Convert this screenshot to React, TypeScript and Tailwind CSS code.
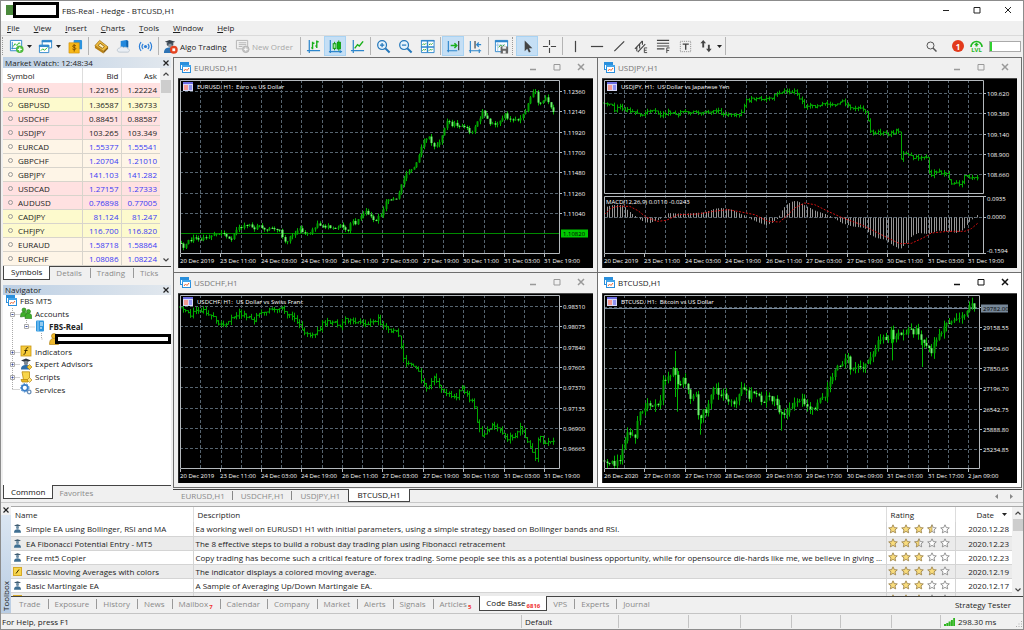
import { useState } from "react";
import type { ReactNode } from "react";

type Point = [number, number];

const TINTS = {
  pink: "bg-[#ffe1e1]",
  yellow: "bg-[#fdfacd]",
  cream: "bg-[#fef5e7]",
};

const QUOTES: { symbol: string; bid: string; ask: string; tint: keyof typeof TINTS; blue?: boolean }[] = [
  { symbol: "EURUSD", bid: "1.22165", ask: "1.22224", tint: "pink" },
  { symbol: "GBPUSD", bid: "1.36587", ask: "1.36733", tint: "yellow" },
  { symbol: "USDCHF", bid: "0.88451", ask: "0.88587", tint: "pink" },
  { symbol: "USDJPY", bid: "103.265", ask: "103.349", tint: "pink" },
  { symbol: "EURCAD", bid: "1.55377", ask: "1.55541", tint: "cream", blue: true },
  { symbol: "GBPCHF", bid: "1.20704", ask: "1.21010", tint: "cream", blue: true },
  { symbol: "GBPJPY", bid: "141.103", ask: "141.282", tint: "cream", blue: true },
  { symbol: "USDCAD", bid: "1.27157", ask: "1.27333", tint: "pink", blue: true },
  { symbol: "AUDUSD", bid: "0.76898", ask: "0.77005", tint: "pink", blue: true },
  { symbol: "CADJPY", bid: "81.124", ask: "81.247", tint: "yellow", blue: true },
  { symbol: "CHFJPY", bid: "116.700", ask: "116.820", tint: "yellow", blue: true },
  { symbol: "EURAUD", bid: "1.58718", ask: "1.58864", tint: "cream", blue: true },
  { symbol: "EURCHF", bid: "1.08086", ask: "1.08224", tint: "cream", blue: true },
];

const SCRIPTS = [
  { kind: "ea", name: "Simple EA using Bollinger, RSI and MA", text: "Ea working well on EURUSD1 H1 with initial parameters, using a simple strategy based on Bollinger bands and RSI.", rating: 3.5, date: "2020.12.28" },
  { kind: "ea", name: "EA Fibonacci Potential Entry - MT5", text: "The 8 effective steps to build a robust day trading plan using Fibonacci retracement", rating: 2.5, date: "2020.12.23" },
  { kind: "ea", name: "Free mt5 Copier", text: "Copy trading has become such a critical feature of forex trading. Some people see this as a potential business opportunity, while for opensource die-hards like me, we believe in giving ...", rating: 3, date: "2020.12.23" },
  { kind: "ind", name: "Classic Moving Averages with colors", text: "The indicator displays a colored moving average.", rating: 4, date: "2020.12.19" },
  { kind: "ea", name: "Basic Martingale EA", text: "A Sample of Averaging Up/Down Martingale EA.", rating: 3, date: "2020.12.17" },
  { kind: "ind", name: "", text: "", rating: 3, date: "" },
];

const DATES_2019 = ["20 Dec 2019", "23 Dec 11:00", "24 Dec 03:00", "24 Dec 19:00", "26 Dec 11:00", "27 Dec 03:00", "27 Dec 19:00", "30 Dec 11:00", "31 Dec 03:00", "31 Dec 19:00"];
const DATES_2020 = ["26 Dec 2020", "27 Dec 01:00", "27 Dec 17:00", "28 Dec 09:00", "29 Dec 01:00", "29 Dec 17:00", "30 Dec 09:00", "31 Dec 01:00", "31 Dec 17:00", "2 Jan 09:00"];

// price paths, in thirds of a pixel from the chart's own corner
const EURUSD: Point[] = [[8,495],[14,510],[27,492],[47,480],[67,482],[92,475],[112,463],[132,467],[150,478],[158,492],[172,455],[187,447],[212,440],[227,450],[242,443],[257,453],[282,452],[304,456],[314,485],[324,495],[337,475],[352,470],[362,452],[374,460],[392,465],[407,452],[420,438],[432,447],[447,443],[472,455],[487,440],[497,455],[507,462],[522,430],[532,440],[542,420],[562,400],[572,410],[589,430],[602,415],[612,405],[622,375],[637,362],[657,360],[667,325],[682,285],[697,275],[712,260],[722,230],[732,195],[742,183],[754,178],[765,212],[782,195],[797,150],[807,128],[822,145],[832,132],[842,150],[857,140],[872,158],[885,168],[895,125],[902,130],[912,95],[922,115],[937,140],[957,140],[972,125],[982,105],[994,128],[1027,122],[1042,100],[1052,70],[1070,35],[1080,80],[1102,60],[1112,80],[1130,105]];
const USDJPY: Point[] = [[7,75],[23,78],[38,95],[53,85],[68,95],[98,100],[123,110],[148,95],[173,112],[198,102],[223,108],[248,100],[288,105],[348,100],[360,115],[378,105],[408,112],[420,105],[428,70],[448,62],[498,65],[528,48],[548,38],[563,45],[580,40],[591,58],[608,85],[638,85],[668,75],[698,80],[723,65],[733,80],[753,95],[778,90],[793,100],[800,140],[808,172],[828,162],[853,168],[888,158],[896,240],[906,220],[933,240],[973,240],[981,290],[1008,280],[1033,290],[1048,320],[1063,318],[1076,325],[1088,285],[1103,305],[1123,295],[1131,302]];
const USDCHF: Point[] = [[7,42],[22,52],[32,67],[40,62],[57,49],[77,52],[92,64],[107,67],[122,92],[137,99],[152,85],[167,72],[182,59],[197,67],[227,79],[247,59],[272,52],[312,47],[327,67],[342,72],[357,92],[382,117],[402,127],[422,115],[432,92],[447,85],[472,92],[487,102],[502,79],[527,92],[542,85],[562,97],[582,87],[600,77],[612,97],[632,114],[652,109],[662,132],[672,177],[679,207],[702,212],[722,232],[732,267],[747,289],[767,257],[782,275],[807,305],[832,315],[852,282],[867,307],[887,337],[897,387],[912,427],[932,409],[947,397],[967,417],[982,435],[1012,432],[1022,397],[1037,427],[1052,457],[1072,502],[1082,417],[1097,457],[1112,449],[1130,435]];
const BTCUSD: Point[] = [[7,502],[18,509],[33,512],[53,502],[63,447],[73,422],[88,417],[98,432],[106,377],[116,337],[123,357],[138,332],[153,342],[168,337],[178,307],[183,252],[198,257],[213,227],[223,247],[233,287],[243,257],[258,287],[268,322],[280,302],[288,367],[295,377],[303,352],[313,367],[321,317],[333,292],[343,287],[350,317],[363,307],[388,322],[400,332],[413,292],[428,287],[438,312],[453,292],[468,312],[483,332],[495,312],[518,327],[528,357],[548,367],[568,342],[593,317],[608,327],[623,357],[638,342],[653,312],[668,312],[678,267],[693,247],[703,212],[718,217],[733,177],[745,232],[763,227],[783,222],[793,197],[813,192],[823,157],[833,132],[853,142],[865,112],[878,142],[893,117],[908,122],[918,102],[933,122],[945,112],[960,152],[978,167],[988,172],[998,147],[1018,112],[1038,92],[1058,87],[1078,77],[1093,52],[1108,37],[1122,52]];
const MACD: Point[] = [[7,388],[28,382],[48,380],[63,383],[78,398],[93,410],[106,420],[123,430],[143,435],[163,428],[183,418],[198,405],[213,406],[248,407],[308,403],[338,392],[358,390],[388,395],[408,405],[428,413],[443,422],[468,433],[493,442],[508,435],[528,420],[540,395],[553,380],[573,369],[588,370],[613,385],[638,398],[668,408],[693,418],[718,435],[748,445],[788,450],[803,470],[823,480],[848,485],[868,500],[893,514],[908,500],[928,475],[948,465],[978,468],[1008,458],[1038,460],[1063,465],[1083,455],[1098,435],[1113,420],[1128,408]];
const SIGNAL: Point[] = [[7,410],[28,390],[48,385],[83,385],[108,398],[133,418],[168,430],[193,427],[228,410],[288,408],[333,400],[378,395],[418,402],[458,410],[498,430],[533,432],[553,415],[578,390],[608,375],[638,380],[678,400],[718,418],[778,440],[818,460],[858,480],[893,497],[928,496],[963,480],[988,465],[1038,460],[1088,460],[1108,452],[1128,435]];

// long wicks that the random ones do not reach: x, top, bottom
const BTC_SPIKES = [[218, 174, 312], [226, 225, 356], [295, 370, 425], [538, 352, 413], [871, 112, 202], [960, 140, 222]];

const CHART_FONT = "font-['Open_Sans',sans-serif] text-[6px]";

function valueAt(path: Point[], x: number) {
  const i = path.findIndex((p) => p[0] >= x);
  if (i <= 0) return path[i === 0 ? 0 : path.length - 1][1];
  const [x0, y0] = path[i - 1];
  const [x1, y1] = path[i];
  return y0 + ((y1 - y0) * (x - x0)) / (x1 - x0);
}

function noise(n: number) {
  const v = Math.sin(n * 127.1 + 11.7) * 43758.5453;
  return v - Math.floor(v);
}

function buildBars(path: Point[], amp: number) {
  const first = path[0][0];
  const last = path[path.length - 1][0];
  const bars = [];
  let open = path[0][1] / 3;
  for (let i = 0; first + i * 7.6 <= last; i++) {
    const x = first + i * 7.6;
    const close = valueAt(path, x) / 3 + (noise(i) - 0.5) * amp;
    const high = Math.min(open, close) - noise(i + 500) * amp;
    const low = Math.max(open, close) + noise(i + 900) * amp;
    bars.push({ x: Math.round(x / 3), open, close, high, low });
    open = close;
  }
  return bars;
}

function Candles({ path, amp }: { path: Point[]; amp: number }) {
  return (
    <g>
      {buildBars(path, amp).map((b, i) => {
        const top = Math.min(b.open, b.close);
        const h = Math.max(Math.abs(b.open - b.close), 1);
        const down = b.close > b.open;
        return (
          <g key={i}>
            <rect x={b.x} y={b.high} width={1} height={b.low - b.high} fill="#00b400" />
            <rect x={b.x - 0.5} y={top} width={2} height={h} fill={down ? "#6df56d" : "#00a000"} />
          </g>
        );
      })}
    </g>
  );
}

function OhlcBars({ path, amp }: { path: Point[]; amp: number }) {
  return (
    <g fill="#00a800">
      {buildBars(path, amp).map((b, i) => (
        <g key={i}>
          <rect x={b.x} y={b.high} width={1} height={Math.max(b.low - b.high, 2)} />
          <rect x={b.x - 1} y={b.open - 0.5} width={1} height={1} />
          <rect x={b.x + 1} y={b.close - 0.5} width={1} height={1} />
        </g>
      ))}
    </g>
  );
}

type ChartProps = {
  title: string;
  dates: string[];
  prices: string[];
  firstRow: number;
  right?: number;
  top?: number;
  split?: boolean;
  children: ReactNode;
  tag?: { y: number; text: string; line: string; fill: string };
  // the price tag covers the first label of the scale
  hideFirst?: boolean;
};

function Chart({ title, dates, prices, firstRow, right = 381, top = 2, split, children, tag, hideFirst }: ChartProps) {
  const bottom = top + 174;
  const priceBottom = split ? 116 : bottom;
  const cols = Array.from({ length: 18 }, (_, i) => Math.round(22.3 + i * 20.24) + 0.5);
  const rows = prices.map((_, i) => Math.round(firstRow + i * 20.33) + 0.5);
  return (
    <svg viewBox="0 0 415 190" preserveAspectRatio="xMinYMin meet" className="block min-h-0 w-full flex-1 bg-black" role="img" aria-label={title}>
      <path d="M0 190V.5H415" fill="none" stroke="#4a4a4a" />
      <g stroke="#56646f" strokeDasharray="3 2" fill="none">
        {cols.map((x) => (
          <path key={x} d={`M${x} ${top}V${bottom}`} />
        ))}
        {rows.map((y) => (
          <path key={y} d={`M2 ${y}H${right}`} />
        ))}
        {split && <path d={`M2 139.5H${right}`} />}
      </g>
      {tag && <path d={`M2 ${tag.y}H${right}`} stroke={tag.line} />}
      {children}
      <g stroke="#b4b9bd" fill="none">
        <path d={`M2.5 ${top + 0.5}H${right + 0.5}V${priceBottom - 0.5}H2.5Z`} />
        {split && <path d={`M2.5 118.5H${right + 0.5}V${bottom - 0.5}H2.5Z`} />}
        {rows.map((y) => (
          <path key={y} d={`M${right} ${y}h3`} />
        ))}
        {split && <path d={`M${right} 118.5h3M${right} 139.5h3M${right} 175.5h3`} />}
        {dates.map((d, i) => (
          <path key={d} d={`M${Math.round(2 + i * 40.45) + 0.5} ${bottom}v3`} />
        ))}
      </g>
      <g className={CHART_FONT} fill="#fff">
        {prices.map((p, i) =>
          hideFirst && i === 0 ? null : (
            <text key={p} x={right + 4} y={Math.round(rows[i] + 2)}>{p}</text>
          )
        )}
        {split && (
          <>
            <text x={right + 4} y={123}>0.0935</text>
            <text x={right + 4} y={141}>0.0000</text>
            <text x={right + 4} y={175}>-0.1594</text>
            <text x={4} y={126}>MACD(12,26,9) 0.0110 -0.0243</text>
          </>
        )}
        {dates.map((d, i) => (
          <text key={d} x={Math.round(2 + i * 40.45)} y={bottom + 9}>{d}</text>
        ))}
        <text x={19} y={top + 9} xmlSpace="preserve">{title}</text>
      </g>
      {tag && (
        <g className={CHART_FONT}>
          <rect x={right + 2} y={tag.y - 4} width={27} height={8} fill={tag.fill} />
          <text x={right + 4} y={Math.round(tag.y + 2)} fill="#000">{tag.text}</text>
        </g>
      )}
      <rect x="5" y={top + 2} width="10" height="9" fill="#d9d9f5" />
      <rect x="5" y={top + 2} width="10" height="2" fill="#6b6be0" />
      <rect x="6" y={top + 5} width="4" height="5" fill="#f49a94" />
      <rect x="11" y={top + 5} width="3" height="5" fill="#8f93f2" />
    </svg>
  );
}

function ChartIcon() {
  return (
    <svg viewBox="0 0 11 11" className="size-[11px] shrink-0">
      <rect x="0.5" y="0.5" width="8" height="7" fill="#fff" stroke="#2a8fdc" />
      <rect x="0" y="0" width="9" height="3" fill="#2a8fdc" />
      <rect x="2.5" y="3.5" width="8" height="7" fill="#fff" stroke="#2a8fdc" />
      <rect x="2" y="3" width="9" height="2" fill="#43a5ea" />
      <path d="M4 9l1.500-2 1.500 1.500L9 6" fill="none" stroke="#e86a3a" />
    </svg>
  );
}

function WindowButtons({ color, wide }: { color: string; wide?: boolean }) {
  const box = wide ? "flex w-[31px] justify-center" : "flex w-6 justify-center";
  return (
    <div className="flex items-center">
      <button aria-label="Minimize" className={box}>
        <svg viewBox="0 0 8 8" className="size-2"><path d={wide ? "M1 4.500h6" : "M1 6.500h6"} stroke={color} strokeWidth={wide ? 1 : 1.5} /></svg>
      </button>
      <button aria-label="Maximize" className={box}>
        <svg viewBox="0 0 8 8" className="size-2"><path d="M1 1.500h6v5.500H1z" fill="none" stroke={color} /></svg>
      </button>
      <button aria-label="Close" className={box}>
        <svg viewBox="0 0 8 8" className="size-2"><path d="M1 1l6 6M7 1L1 7" stroke={color} strokeWidth={wide ? 1 : 1.5} /></svg>
      </button>
    </div>
  );
}

function ChartWindow({ name, active, children }: { name: string; active?: boolean; children: ReactNode }) {
  return (
    <section className={`flex min-h-0 min-w-0 flex-col px-1 pb-1 ${active ? "bg-white text-[#222]" : "bg-[#f0f0f0] text-[#777]"}`}>
      <header className="flex h-5 shrink-0 items-center gap-[3px] pb-0.5 pl-0.5">
        <ChartIcon />
        <h2 className="flex-1">{name}</h2>
        <WindowButtons color={active ? "#111" : "#999"} />
      </header>
      {children}
    </section>
  );
}

const ICONS: Record<string, ReactNode> = {
  newChart: (
    <>
      <path d="M1.500 1.500h12v11h-12z" fill="#fff" stroke="#2d86cc" />
      <path d="M3.500 3v8M2.500 10h9" stroke="#2d86cc" fill="none" />
      <path d="M4.500 8l2-3 2 2 2-3 1.500 1" stroke="#26b226" fill="none" />
      <circle cx="11.500" cy="11" r="4" fill="#4dbb3c" />
      <path d="M11.500 8.800v4.400M9.300 11h4.400" stroke="#fff" strokeWidth="1.300" />
    </>
  ),
  profiles: (
    <>
      <path d="M4.500 1.500h10v8h-10z" fill="#fff" stroke="#2d86cc" />
      <path d="M4 2.500h11" stroke="#2d86cc" strokeWidth="2" />
      <path d="M1.500 6.500h10v8h-10z" fill="#fff" stroke="#2d86cc" />
      <path d="M1 7.500h11" stroke="#2d86cc" strokeWidth="2" />
      <path d="M3 12.500l2-2 2 1.500 3-3" stroke="#26b226" fill="none" />
    </>
  ),
  market: (
    <>
      <rect x="6" y="1" width="9" height="10" rx="1" fill="#2d93dd" />
      <path d="M1 4h11v11H1z" fill="#f7b718" stroke="#c98d08" strokeWidth=".6" />
      <path d="M8.500 7.300c-2-1.200-3.500-.6-3.500.5 0 1.500 3.300.9 3.300 2.400 0 1.200-1.800 1.600-3.600.4M6.600 5.600v7.800" stroke="#7a4c00" fill="none" />
    </>
  ),
  gold: (
    <>
      <path d="M6 1.500l9 7-5 4.500-9-6z" fill="#f0bc3c" stroke="#9b6d10" strokeWidth=".8" />
      <path d="M1 7l9 6v2.500L1 9.500z" fill="#b98113" />
      <path d="M10 13l5-4.500v2l-5 5z" fill="#8f5f0a" />
      <path d="M6.500 4.500l4.500 3.500-2 2-4.500-3z" fill="#fff1bd" stroke="#7a4c00" strokeWidth=".8" />
    </>
  ),
  cloud: (
    <>
      <path d="M5 2l6-1 2 1v7l-8 1z" fill="#2288dd" />
      <path d="M11 1l2 1v7l-2-1z" fill="#0f62ad" />
      <path d="M4 9.500c1-1.500 3-1.500 4-.5 2-1 4.500 0 4.500 1.500 2.500 0 2.500 3 0 3.500H4c-3.500 0-3.500-4 0-4.500z" fill="#e9eef4" stroke="#a9b5c2" strokeWidth=".7" />
    </>
  ),
  signals: (
    <g fill="none" stroke="#2d7fd8" strokeWidth="1.300">
      <circle cx="8" cy="8" r="1.700" fill="#2d7fd8" stroke="none" />
      <path d="M5.500 5.300a4 4 0 000 5.400M10.500 5.300a4 4 0 010 5.400M3.300 3.300a7 7 0 000 9.400M12.700 3.300a7 7 0 010 9.400" />
    </g>
  ),
  algo: (
    <>
      <path d="M2 3l5-2 6 2-5 2z" fill="#333c46" />
      <path d="M4 4h7v2.500c-1 2-6 2-7 0z" fill="#4b5763" />
      <circle cx="7.500" cy="7" r="2" fill="#8d97a1" />
      <path d="M1 15c0-5 3-6 6.500-6 3 0 5 1 5 6z" fill="#2c73b5" />
      <circle cx="11.500" cy="11.500" r="4.200" fill="#e5431f" />
      <rect x="10" y="10" width="3" height="3" fill="#fff" />
    </>
  ),
  newOrder: (
    <g fill="none" stroke="#b3b3b3">
      <path d="M1.500 1.500h12v7M1.500 1.500v9h6" />
      <path d="M4 4h8M4 6h8M4 8h4" />
      <circle cx="11.500" cy="11" r="3.500" fill="#c4c4c4" />
      <path d="M11.500 9v4M9.500 11h4" stroke="#fff" />
    </g>
  ),
  bars: (
    <g fill="none">
      <path d="M3.500 1v14M1 12.500h14" stroke="#2d86cc" strokeWidth="1.300" />
      <path d="M7 3v8M5.500 9.500H7M7 4.500h2M11.500 1.500v8M10 7.500h1.500M11.500 3h2" stroke="#19b019" strokeWidth="1.500" />
    </g>
  ),
  candles: (
    <g>
      <path d="M2.500 1v14M1 13.500h14M13 12v3" stroke="#2d86cc" strokeWidth="1.300" fill="none" />
      <path d="M7 3v9M11.500 1.500v11" stroke="#0a9a0a" />
      <rect x="5.500" y="5" width="3" height="5" fill="#9be89b" stroke="#0a9a0a" />
      <rect x="10" y="3.500" width="3.200" height="7" fill="#10b510" stroke="#0a9a0a" />
    </g>
  ),
  line: (
    <g fill="none">
      <path d="M3.500 1v14M1 12.500h14" stroke="#2d86cc" strokeWidth="1.300" />
      <path d="M5 10l3-4 2 1.500 4-5" stroke="#19b019" strokeWidth="1.500" />
    </g>
  ),
  zoomIn: (
    <g fill="none" stroke="#2377bb">
      <circle cx="6.500" cy="6.500" r="4.700" fill="#e6f3fc" strokeWidth="1.300" />
      <path d="M10 10l4.500 4.500" strokeWidth="2.200" />
      <path d="M4.200 6.500h4.600M6.500 4.200v4.600" strokeWidth="1.300" />
    </g>
  ),
  zoomOut: (
    <g fill="none" stroke="#2377bb">
      <circle cx="6.500" cy="6.500" r="4.700" fill="#e6f3fc" strokeWidth="1.300" />
      <path d="M10 10l4.500 4.500" strokeWidth="2.200" />
      <path d="M4.200 6.500h4.600" strokeWidth="1.300" />
    </g>
  ),
  tile: (
    <g fill="none">
      <path d="M1.500 1.500h13.500v13H1.500z" fill="#fff" stroke="#2d86cc" />
      <path d="M1 2h14.500M8 2v12M1 8.500h14" stroke="#2d86cc" strokeWidth="1.500" />
      <path d="M2.500 6.500l1.500-1.500 1 1 1.500-1.500M9.500 6.500l1.500-1.500 1 1 1.500-1.500M2.500 12.500l1.500-1.500 1 1 1.500-1.500M9.500 12.500l1.500-1.500 1 1 1.500-1.500" stroke="#30a830" />
    </g>
  ),
  shift: (
    <g fill="none">
      <path d="M2.500 2v12M1 12.500h11" stroke="#2d86cc" strokeWidth="1.200" />
      <path d="M5 7h6M9 4.500L11.500 7 9 9.500" stroke="#19b019" strokeWidth="1.600" />
      <path d="M13.500 2v10" stroke="#444" strokeWidth="1.300" />
    </g>
  ),
  indent: (
    <g fill="none">
      <path d="M2.500 2v13M1 12.500h13M12 11v4" stroke="#2d86cc" strokeWidth="1.200" />
      <path d="M7.500 2v8" stroke="#444" strokeWidth="1.300" />
      <path d="M14 6H9.500M11.500 3.800L9.300 6l2.200 2.200" stroke="#2d86cc" strokeWidth="1.400" />
    </g>
  ),
  template: (
    <>
      <path d="M1.500 1.500h13v12h-13z" fill="#fff" stroke="#2d86cc" />
      <path d="M1 2.500h14" stroke="#2d86cc" strokeWidth="2" />
      <path d="M4 4v9M2 6.500h10" stroke="#9fc8e8" />
      <path d="M5 9l2-2.500 2 1.500 2-2" stroke="#30a830" fill="none" />
      <path d="M7 8h8v7.500H7z" fill="#666" />
      <path d="M9 8h4v2.500H9zM9.500 12.500h3v3h-3z" fill="#eee" />
    </>
  ),
  cursor: <path d="M5 1.500v11.500l2.700-2.500 1.800 4 1.900-.9-1.800-3.800h3.600z" fill="#444" />,
  cross: <path d="M8 1v5.500M8 9.500V15M1 8h5.500M9.500 8H15" stroke="#444" strokeWidth="1.200" />,
  vline: <path d="M8 2v12" stroke="#444" strokeWidth="1.300" />,
  hline: <path d="M1 8h13" stroke="#444" strokeWidth="1.300" />,
  trend: <path d="M2.500 13L13 2.500" stroke="#444" strokeWidth="1.300" />,
  channel: (
    <g stroke="#444" fill="none">
      <path d="M1 10.500L9 2M4 14l8-8.500M3 8v5M6 5v5M9 2v4" strokeWidth="1.200" />
      <path d="M14 9.500h-3v5h3M11 12h2.500" />
    </g>
  ),
  fibo: (
    <g stroke="#444" fill="none">
      <path d="M1 1.500h13M1 4.500h13M1 7.500h13M1 10.500h8" strokeWidth="1.200" />
      <path d="M14.500 9.500h-3v5.500M11.500 12.200h2.500" />
    </g>
  ),
  text: (
    <g fill="none" stroke="#444">
      <path d="M2.500 2.500h11v11h-11z" strokeDasharray="1 1" stroke="#888" />
      <path d="M5 5.500h6.500M8.200 5.500v6" strokeWidth="1.500" />
    </g>
  ),
  arrows: (
    <g fill="#444">
      <path d="M4.500 1L1.500 4.500h2V9h2V4.500h2zM10.500 14l3-3.500h-2V6h-2v4.500h-2z" />
    </g>
  ),
};

function Icon({ name }: { name: string }) {
  return (
    <svg viewBox="0 0 16 16" className="size-[15px] shrink-0">{ICONS[name]}</svg>
  );
}

function Tool({ name, label, on, menu }: { name: string; label: string; on?: boolean; menu?: boolean }) {
  return (
    <button
      aria-label={label}
      className={`flex h-5 shrink-0 items-center ${menu ? "w-[29px] gap-[3px] pl-[3px]" : "w-[22px] justify-center"} ${on ? "border border-[#a9d3f3] bg-[#c5dff5]" : ""}`}
    >
      <Icon name={name} />
      {menu && <Caret />}
    </button>
  );
}

function Caret() {
  return (
    <svg viewBox="0 0 5 3" className="h-[3px] w-[5px] shrink-0"><path d="M0 0h5L2.500 3z" fill="#222" /></svg>
  );
}

function Sep() {
  return <span className="mr-px ml-0.5 h-[18px] w-px shrink-0 bg-[#b4b4b4]" />;
}

function Grip() {
  return <span className="mr-0.5 h-[18px] w-0.5 shrink-0 border-l border-dotted border-[#999]" />;
}

function Toolbar() {
  return (
    <div className="flex h-[22px] shrink-0 items-center border-t border-[#dadada] pb-px pl-px">
      <Grip />
      <Tool name="newChart" label="New chart" menu />
      <Tool name="profiles" label="Profiles" menu />
      <Tool name="market" label="Market" />
      <Sep />
      <Tool name="gold" label="Open data folder" />
      <Tool name="cloud" label="Virtual hosting" />
      <Tool name="signals" label="Signals" />
      <Sep />
      <button className="flex w-[72px] shrink-0 items-center gap-0.5 pl-[3px] whitespace-nowrap">
        <Icon name="algo" />
        Algo Trading
      </button>
      <button disabled className="flex w-[66px] shrink-0 items-center gap-0.5 pl-[3px] whitespace-nowrap text-[#a8a8a8]">
        <Icon name="newOrder" />
        New Order
      </button>
      <Sep />
      <Tool name="bars" label="Bar chart" />
      <Tool name="candles" label="Candlesticks" on />
      <Tool name="line" label="Line chart" />
      <Sep />
      <Tool name="zoomIn" label="Zoom in" />
      <Tool name="zoomOut" label="Zoom out" />
      <Tool name="tile" label="Tile windows" />
      <Sep />
      <Tool name="shift" label="Auto scroll" on />
      <Tool name="indent" label="Chart shift" />
      <Sep />
      <Tool name="template" label="Templates" />
      <Grip />
      <Tool name="cursor" label="Cursor" on />
      <Tool name="cross" label="Crosshair" />
      <Sep />
      <Tool name="vline" label="Vertical line" />
      <Tool name="hline" label="Horizontal line" />
      <Tool name="trend" label="Trendline" />
      <Tool name="channel" label="Equidistant channel" />
      <Tool name="fibo" label="Fibonacci retracement" />
      <Tool name="text" label="Text label" />
      <Tool name="arrows" label="Objects" menu />
      <span className="h-[18px] w-px bg-[#b4b4b4]" />
      <div className="ml-auto flex items-center pr-0.5">
        <button aria-label="Search" className="mr-[15px]">
          <svg viewBox="0 0 11 11" className="size-[11px]" fill="none" stroke="#555">
            <circle cx="4.500" cy="4.500" r="3.500" /><path d="M7 7l3.500 3.500" strokeWidth="1.500" />
          </svg>
        </button>
        <button aria-label="Notifications" className="mr-1.5 flex size-3 items-center justify-center rounded-full bg-[#e23a1c] font-bold text-white">1</button>
        <div className="mr-1.5 flex w-[13px] flex-col items-center text-[6px] leading-[6px] font-bold text-[#1eb91e]">
          <svg viewBox="0 0 13 7" className="h-[7px] w-[13px]" fill="none" stroke="#1eb91e" strokeWidth="1.500">
            <path d="M1 7a5.500 5.500 0 0111 0" /><path d="M6.500 2.500l2.500 2.500h-1.500v1.500h-2V5H4z" fill="#1eb91e" stroke="none" />
          </svg>
          LVL
        </div>
        <div className="h-[11px] w-8 border border-[#aaa] bg-white"><div className="h-full w-0.5 bg-[#2fd12f]" /></div>
      </div>
    </div>
  );
}

function CloseMark({ label }: { label: string }) {
  return (
    <button aria-label={label}>
      <svg viewBox="0 0 6 6" className="size-1.5"><path d="M.5.500l5 5M5.500.500l-5 5" stroke="#222" strokeWidth="1.200" /></svg>
    </button>
  );
}

function ScrollBar({ thumb }: { thumb: string }) {
  return (
    <div className="flex w-[11px] shrink-0 flex-col items-center bg-[#f0f0f0] py-1" aria-hidden="true">
      <svg viewBox="0 0 6 4" className="mb-1 h-1 w-1.5 shrink-0"><path d="M.5 3.500L3 1l2.500 2.500" fill="none" stroke="#444" strokeWidth="1.200" /></svg>
      <span className={`w-[10px] shrink-0 bg-[#cdcdcd] ${thumb}`} />
      <svg viewBox="0 0 6 4" className="mt-auto h-1 w-1.5 shrink-0"><path d="M.5.500L3 3 5.500.500" fill="none" stroke="#444" strokeWidth="1.200" /></svg>
    </div>
  );
}

function DockTabs({ tabs, active, onPick }: { tabs: string[]; active: string; onPick: (tab: string) => void }) {
  return (
    <div className="flex h-[14px] shrink-0 items-stretch">
      {tabs.map((tab, i) => (
        <button
          key={tab}
          onClick={() => onPick(tab)}
          className={
            tab === active
              ? "border border-t-0 border-[#444] bg-white px-[7px] pb-px text-[#111]"
              : "flex items-center border-t border-[#444] pb-px pl-[6px] text-[#8a8a8a]"
          }
        >
          {tab}
          {tab !== active && i < tabs.length - 1 && <span className="ml-2 h-[10px] w-px bg-[#999]" />}
        </button>
      ))}
      <span className="flex-1 border-t border-[#444]" />
    </div>
  );
}

function MarketWatch() {
  const [tab, setTab] = useState("Symbols");
  return (
    <section className="flex flex-col px-0.5">
      <header className="flex h-[11px] items-center justify-between bg-linear-to-r from-[#bccfe4] to-[#e2e8ee] px-0.5">
        <h2>Market Watch: 12:48:34</h2>
        <CloseMark label="Close market watch" />
      </header>
      <div className="flex bg-white">
        <div className="min-w-0 flex-1">
          <table className="w-full table-fixed border-collapse">
            <thead>
              <tr className="h-[15px]">
                <th className="border-r border-[#ddd] p-0 pl-1 text-left font-normal">Symbol</th>
                <th className="w-[39px] border-r border-[#ddd] p-0 pr-0.5 text-right font-normal">Bid</th>
                <th className="w-[39px] p-0 pr-[3px] text-right font-normal">Ask</th>
              </tr>
            </thead>
            <tbody>
              {QUOTES.map((q) => (
                <tr key={q.symbol} className={`h-[14px] border-b border-[#d8d4cc] ${TINTS[q.tint]}`}>
                  <td className="border-r border-[#d8d4cc] p-0 pl-[5px]">
                    <span className="flex items-center gap-[5px]">
                      <span className="size-[5px] rounded-full border border-[#999]" />
                      {q.symbol}
                    </span>
                  </td>
                  <td className={`border-r border-[#d8d4cc] p-0 pr-0.5 text-right ${q.blue ? "text-[#3a3af5]" : ""}`}>{q.bid}</td>
                  <td className={`p-0 pr-[3px] text-right ${q.blue ? "text-[#3a3af5]" : ""}`}>{q.ask}</td>
                </tr>
              ))}
            </tbody>
          </table>
        </div>
        <ScrollBar thumb="h-[13px]" />
      </div>
      <DockTabs tabs={["Symbols", "Details", "Trading", "Ticks"]} active={tab} onPick={setTab} />
    </section>
  );
}

const NAV_ICONS: Record<string, ReactNode> = {
  accounts: (
    <g fill="#3fae2a" stroke="#257a17" strokeWidth=".6">
      <circle cx="4" cy="3" r="2" /><path d="M.5 10c0-4 1-5 3.500-5s3.500 1 3.500 4z" />
      <circle cx="8.500" cy="4.500" r="2" /><path d="M5 11.500c0-4 1-5 3.500-5s3.300 1 3.300 5z" />
    </g>
  ),
  server: (
    <>
      <rect x="2" y="0.500" width="8" height="11" rx="1" fill="#2b95de" />
      <path d="M4 .500v11" stroke="#9fd3f7" /><path d="M6 3h3M6 5h3M6 8h2" stroke="#fff" />
    </>
  ),
  user: (
    <g fill="#efb92c" stroke="#a87909" strokeWidth=".6">
      <circle cx="6" cy="3" r="2.500" /><path d="M1.500 11.500c0-5 2-6 4.500-6s4.500 1 4.500 6z" />
    </g>
  ),
  indicators: (
    <>
      <rect x="1" y="1" width="10" height="10" fill="#f6cb3a" stroke="#c79512" strokeWidth=".8" />
      <path d="M8.300 2.800c-1.500-.5-2 .3-2.300 1.700L5.200 8c-.3 1.200-.8 1.600-1.700 1.300M4.300 5.500h3.300" fill="none" stroke="#3c2c00" />
    </>
  ),
  experts: (
    <>
      <path d="M1 2.500L6 .500l5 2-5 2z" fill="#2f3842" /><circle cx="6" cy="5" r="2.200" fill="#7d8892" />
      <path d="M1 11.500c0-3.500 2-4.500 5-4.500s4 1 4 4.500z" fill="#2d6da8" />
      <path d="M9.500 6.500l2.500 2.500-2.500 2.500L7 9z" fill="#f6cb3a" stroke="#a87909" strokeWidth=".6" />
    </>
  ),
  scripts: (
    <>
      <path d="M2 .800h7.500v8H3.500z" fill="#f8d54a" stroke="#bb8a0c" strokeWidth=".8" />
      <path d="M1 8.500h7v2.500H2z" fill="#e9b925" stroke="#bb8a0c" strokeWidth=".8" />
      <path d="M9.500 6.500L12 9l-2.500 2.500L7 9z" fill="#ffe173" stroke="#a87909" strokeWidth=".6" />
    </>
  ),
  services: (
    <g fill="none" stroke="#3a7fc8">
      <circle cx="4.800" cy="4.800" r="3" strokeWidth="1.800" />
      <circle cx="4.800" cy="4.800" r="4.200" strokeDasharray="1.500 1.500" />
      <circle cx="9.200" cy="9" r="1.800" stroke="#6a8fb8" strokeWidth="1.300" />
    </g>
  ),
};

function NavIcon({ name }: { name: string }) {
  return <svg viewBox="0 0 12 12" className="size-3 shrink-0">{NAV_ICONS[name]}</svg>;
}

function Navigator() {
  const [tab, setTab] = useState("Common");
  return (
    <section className="flex min-h-0 flex-1 flex-col px-0.5">
      <header className="flex h-[10px] items-center justify-between bg-linear-to-r from-[#bccfe4] to-[#e2e8ee] px-0.5">
        <h2>Navigator</h2>
        <CloseMark label="Close navigator" />
      </header>
      <div className="min-h-0 flex-1 bg-white">
        <ul className="relative grid h-[101px] auto-rows-fr">
          <svg viewBox="0 0 40 101" className="absolute top-0 left-0 h-[101px] w-10" fill="none" stroke="#aaa">
            <path d="M9.500 13v82M9.500 19.500h7M9.500 57.500h7M9.500 69.500h7M9.500 82.500h7M9.500 94.500h7M23.500 25v7h9M38.500 38v6h5" strokeDasharray="1 1" />
            <path d="M7.500 17.500h4v4h-4zM7.500 55.500h4v4h-4zM7.500 67.500h4v4h-4zM7.500 80.500h4v4h-4zM21.500 29.500h4v4h-4z" fill="#fff" />
            <path d="M8.500 19.500h2M8.500 57.500h2M9.500 56.500v2M8.500 69.500h2M9.500 68.500v2M8.500 82.500h2M9.500 81.500v2M22.500 31.500h2" stroke="#36489a" />
          </svg>
          <li className="flex items-center gap-[3px] pl-[3px]"><ChartIcon /> FBS MT5</li>
          <li className="flex items-center gap-[3px] pl-[17px]"><NavIcon name="accounts" /> Accounts</li>
          <li className="flex items-center gap-[3px] pl-[31px] font-bold"><NavIcon name="server" /> FBS-Real</li>
          <li className="flex items-center pl-[45px]">
            <NavIcon name="user" />
            <span className="-ml-[5px] h-[10px] flex-1 border-[3px] border-black bg-white" />
          </li>
          <li className="flex items-center gap-[3px] pl-[17px]"><NavIcon name="indicators" /> Indicators</li>
          <li className="flex items-center gap-[3px] pl-[17px]"><NavIcon name="experts" /> Expert Advisors</li>
          <li className="flex items-center gap-[3px] pl-[17px]"><NavIcon name="scripts" /> Scripts</li>
          <li className="flex items-center gap-[3px] pl-[17px]"><NavIcon name="services" /> Services</li>
        </ul>
      </div>
      <DockTabs tabs={["Common", "Favorites"]} active={tab} onPick={setTab} />
    </section>
  );
}

const STAR = "M5 .800l1.300 2.800 3 .300-2.300 2 .700 3L5 7.400 2.300 8.900l.700-3-2.300-2 3-.300z";

function Stars({ value }: { value: number }) {
  return (
    <div className="flex gap-[3px]" aria-label={`${value} of 5`}>
      {[1, 2, 3, 4, 5].map((n) => {
        const full = value >= n;
        return (
          <svg key={n} viewBox="0 0 10 10" className="size-[10px]">
            <path d={STAR} fill={full ? "#f9dc7c" : "#fff"} stroke={full ? "#a08850" : "#8a8a8a"} strokeWidth=".9" />
            {!full && value > n - 1 && <path d="M5 .800v6.600L2.300 8.900l.700-3-2.300-2 3-.300z" fill="#f9dc7c" stroke="#a08850" strokeWidth=".7" />}
          </svg>
        );
      })}
    </div>
  );
}

const TOOL_TABS = ["Trade", "Exposure", "History", "News", "Mailbox", "Calendar", "Company", "Market", "Alerts", "Signals", "Articles", "Code Base", "VPS", "Experts", "Journal"];
const COUNTS: Record<string, string> = { Mailbox: "7", Articles: "5", "Code Base": "6816" };

function Toolbox() {
  const [tab, setTab] = useState("Code Base");
  return (
    <section className="flex h-[111px] shrink-0 border-t border-[#c8c8c8] pt-[3px]">
      <div className="flex w-[10px] shrink-0 flex-col items-center gap-0.5 pt-px">
        <CloseMark label="Close toolbox" />
        <div className="flex w-full flex-1 items-end justify-center bg-linear-to-b from-[#dbe6f2] to-[#b9cde3] pb-0.5">
          <h2 className="rotate-180 text-[8px] leading-[10px] [writing-mode:vertical-rl]">Toolbox</h2>
        </div>
      </div>
      <div className="flex min-w-0 flex-1 flex-col">
        <div className="flex h-[90px] overflow-hidden border-t border-[#aaa] bg-white">
          <div className="min-w-0 flex-1">
            <table className="w-full table-fixed border-collapse">
              <thead>
                <tr className="h-[15px] text-left">
                  <th className="w-[182px] border-r border-[#ddd] p-0 pl-1 font-normal">Name</th>
                  <th className="border-r border-[#ddd] p-0 pl-1 font-normal">Description</th>
                  <th className="w-[69px] border-r border-[#ddd] p-0 pl-1 font-normal">Rating</th>
                  <th className="w-[57px] p-0 pr-[5px] font-normal">
                    <span className="flex items-center justify-end gap-2">Date <Caret /></span>
                  </th>
                </tr>
              </thead>
              <tbody>
                {SCRIPTS.map((s, i) => (
                  <tr key={i} className="h-[14px] border-b border-[#d4d4d4] even:bg-[#ebebeb]">
                    <td className="border-r border-[#d4d4d4] p-0 pl-0.5">
                      <span className="flex items-center gap-1">
                        {s.kind === "ea" ? (
                          <svg viewBox="0 0 9 9" className="size-[9px] shrink-0">
                            <path d="M1 1.500L4.500.300 8 1.500 4.500 2.800z" fill="#3f5b70" /><circle cx="4.500" cy="3.500" r="1.500" fill="#6d8ea6" />
                            <path d="M1 8.700C1 6 2.500 5.300 4.500 5.300S8 6 8 8.700z" fill="#3f6f92" />
                          </svg>
                        ) : (
                          <svg viewBox="0 0 9 9" className="size-[9px] shrink-0">
                            <rect x=".5" y=".5" width="8" height="8" fill="#f7d54c" stroke="#d5a926" /><path d="M3 6.500l3-4" stroke="#3c2c00" />
                          </svg>
                        )}
                        <span className="whitespace-nowrap">{s.name}</span>
                      </span>
                    </td>
                    <td className="truncate border-r border-[#d4d4d4] p-0 pl-0.5">{s.text}</td>
                    <td className="border-r border-[#d4d4d4] p-0 pl-px"><Stars value={s.rating} /></td>
                    <td className="p-0 pr-[3px] text-right">{s.date}</td>
                  </tr>
                ))}
              </tbody>
            </table>
          </div>
          <ScrollBar thumb="h-3" />
        </div>
        <div className="flex h-[15px] shrink-0">
          {TOOL_TABS.map((t, i) => {
            const on = t === tab;
            const bar = !on && TOOL_TABS[i + 1] !== tab && i < TOOL_TABS.length - 1;
            return (
              <button
                key={t}
                onClick={() => setTab(t)}
                className={`flex items-center pb-px ${on ? "border border-t-0 border-[#444] bg-white px-1.5 text-[#111]" : "border-t border-[#444] pl-1.5 text-[#8a8a8a] first:pl-2"}`}
              >
                {t}
                {COUNTS[t] && <sub className="bottom-0 mt-1.5 ml-px text-[6px] font-bold text-[#f03030]">{COUNTS[t]}</sub>}
                {!on && <span className={`ml-[7px] h-[10px] w-px ${bar ? "bg-[#999]" : ""}`} />}
              </button>
            );
          })}
          <div className="flex flex-1 items-center justify-end border-t border-[#444] pr-3">
            <button>Strategy Tester</button>
          </div>
        </div>
      </div>
    </section>
  );
}

function StatusBar() {
  const cell = "h-[13px] shrink-0 border-l border-[#c4c4c4]";
  return (
    <footer className="flex h-4 shrink-0 items-center border-t border-[#c4c4c4]">
      <span className="flex-1 pl-px">For Help, press F1</span>
      <span className={`${cell} flex w-[97px] items-center pl-[3px]`}>Default</span>
      <span className={`${cell} w-[70px]`} />
      <span className={`${cell} w-[52px]`} />
      <span className={`${cell} w-[51px]`} />
      <span className={`${cell} w-[49px]`} />
      <span className={`${cell} w-[51px]`} />
      <span className={`${cell} w-[49px]`} />
      <span className={`${cell} flex w-[83px] items-center gap-[3px] pl-[3px]`}>
        <svg viewBox="0 0 11 8" className="h-2 w-[11px]" fill="#2fb51f"><path d="M0 6h2v2H0zM2.300 5h2v3h-2zM4.600 3.500h2V8h-2zM6.900 2h2v6h-2zM9.200 0h1.800v8H9.200z" /></svg>
        <span className="flex-1">298.30 ms</span>
        <svg viewBox="0 0 7 7" className="size-[7px] self-end" fill="#aaa"><path d="M5 0h1v1H5zM5 2.500h1v1H5zM5 5h1v1H5zM2.500 2.500h1v1h-1zM2.500 5h1v1h-1zM0 5h1v1H0z" /></svg>
      </span>
    </footer>
  );
}

function ChartTabs() {
  const [tab, setTab] = useState("BTCUSD,H1");
  const tabs = ["EURUSD,H1", "USDCHF,H1", "USDJPY,H1", "BTCUSD,H1"];
  return (
    <div className="flex h-[14px] shrink-0 pt-px">
      {tabs.map((t, i) => (
        <button
          key={t}
          onClick={() => setTab(t)}
          className={`flex items-center pb-px ${t === tab ? "border border-t-0 border-[#444] bg-white px-2 text-[#111]" : "border-t border-[#444] pl-2 text-[#8a8a8a]"}`}
        >
          {t}
          {t !== tab && <span className={`ml-[7px] h-[9px] w-px ${i < 2 ? "bg-[#888]" : ""}`} />}
        </button>
      ))}
      <div className="flex flex-1 items-center justify-end gap-3 border-t border-[#444] pr-[9px]">
        <svg viewBox="0 0 3 5" className="h-[5px] w-[3px]"><path d="M3 0v5L0 2.500z" fill="#888" /></svg>
        <svg viewBox="0 0 3 5" className="h-[5px] w-[3px]"><path d="M0 0v5l3-2.500z" fill="#888" /></svg>
      </div>
    </div>
  );
}

export default function App() {
  return (
    <div className="flex h-screen flex-col overflow-hidden border border-[#8c8c8c] bg-[#f0f0f0] font-['Open_Sans',sans-serif] text-[8px] leading-[11px] text-[#222]">
      <header className="flex h-5 shrink-0 items-center bg-white pb-0.5 pl-[5px]">
        <span className="h-[10px] w-2 bg-[#4b8a3c]" />
        <span className="mr-[3px] -ml-px h-4 w-[46px] border-[3px] border-black bg-white" />
        <h1 className="flex-1">FBS-Real - Hedge - BTCUSD,H1</h1>
        <WindowButtons color="#222" wide />
      </header>
      <nav className="flex h-[14px] shrink-0 items-center gap-[14px] pb-0.5 pl-1.5">
        {["File", "View", "Insert", "Charts", "Tools", "Window", "Help"].map((m) => (
          <button key={m}><u>{m[0]}</u>{m.slice(1)}</button>
        ))}
      </nav>
      <Toolbar />
      <div className="flex min-h-0 flex-1">
        <aside className="flex w-[172px] shrink-0 flex-col gap-[5px] pb-[3px]">
          <MarketWatch />
          <Navigator />
        </aside>
        <main className="mr-px flex min-w-0 flex-1 flex-col">
          <div className="grid min-h-0 flex-1 grid-cols-2 grid-rows-2 gap-px bg-[#6e6e6e] p-px">
            <ChartWindow name="EURUSD,H1">
              <Chart
                title="EURUSD, H1:  Euro vs US Dollar"
                dates={DATES_2019}
                prices={["1.12360", "1.12140", "1.11920", "1.11700", "1.11480", "1.11260", "1.11040"]}
                firstRow={13}
                tag={{ y: 155.5, text: "1.10820", line: "#008a00", fill: "#00c800" }}
              >
                <Candles path={EURUSD} amp={3} />
              </Chart>
            </ChartWindow>
            <ChartWindow name="USDJPY,H1">
              <Chart title="USDJPY, H1:  US Dollar vs Japanese Yen" dates={DATES_2019} prices={["109.620", "109.380", "109.140", "108.900", "108.660"]} firstRow={15} split>
                <OhlcBars path={USDJPY} amp={3} />
                <g fill="#949494">
                  {Array.from({ length: 148 }, (_, i) => {
                    const x = 7 + i * 7.6;
                    const y = valueAt(MACD, x) / 3;
                    return <rect key={i} x={Math.round(x / 3)} y={Math.min(y, 139.5)} width={1} height={Math.abs(y - 139.5)} />;
                  })}
                </g>
                <path d={"M" + SIGNAL.map(([x, y]) => `${x / 3} ${y / 3}`).join("L")} fill="none" stroke="#d01010" strokeDasharray="2 1.500" />
              </Chart>
            </ChartWindow>
            <ChartWindow name="USDCHF,H1">
              <Chart title="USDCHF, H1:  US Dollar vs Swiss Franc" dates={DATES_2019} prices={["0.98310", "0.98075", "0.97840", "0.97605", "0.97370", "0.97135", "0.96900", "0.96665"]} firstRow={13}>
                <OhlcBars path={USDCHF} amp={4} />
              </Chart>
            </ChartWindow>
            <ChartWindow name="BTCUSD,H1" active>
              <Chart
                title="BTCUSD, H1:  Bitcoin vs US Dollar"
                dates={DATES_2020}
                prices={["29812.50", "29158.55", "28504.60", "27850.65", "27196.70", "26542.75", "25888.80", "25234.85"]}
                firstRow={14}
                right={377}
                hideFirst
                tag={{ y: 15.5, text: "29782.00", line: "#778899", fill: "#778899" }}
              >
                <g fill="#00b400">
                  {BTC_SPIKES.map(([x, y0, y1]) => (
                    <rect key={x} x={Math.round(x / 3)} y={y0 / 3} width={1} height={(y1 - y0) / 3} />
                  ))}
                </g>
                <Candles path={BTCUSD} amp={6} />
              </Chart>
            </ChartWindow>
          </div>
          <ChartTabs />
        </main>
      </div>
      <Toolbox />
      <StatusBar />
    </div>
  );
}
